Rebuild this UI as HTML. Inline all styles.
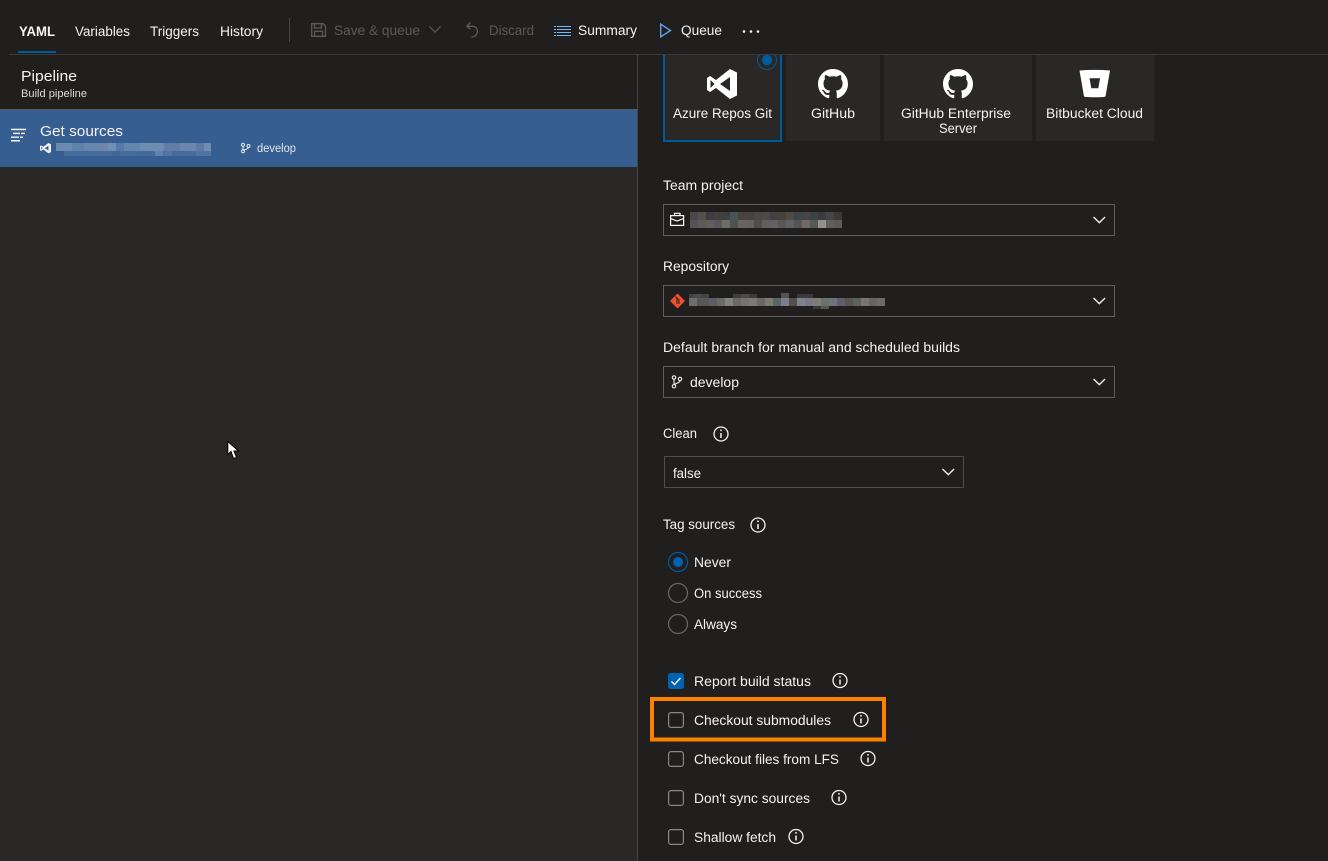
<!DOCTYPE html>
<html lang="en">
<head>
<meta charset="utf-8">
<title>Pipeline - Get sources</title>
<style>
html,body{margin:0;padding:0;width:1328px;height:861px;overflow:hidden;background:#201f1e}
svg{display:block}
text{font-family:"Liberation Sans",sans-serif;font-size:13.5px;fill:#f4f4f4}
.d{fill:#5c5a58}
.i circle{fill:none;stroke:#f4f4f4;stroke-width:1.3}
.i path{fill:none;stroke:#f4f4f4;stroke-width:1.5}
.chev{fill:none;stroke:#f0f0f0;stroke-width:1.4}
.box{fill:none;stroke:#605e5c;stroke-width:1}
.cb{fill:none;stroke:#8a8886;stroke-width:1.2}
.rd{fill:none;stroke:#676563;stroke-width:1.3}
</style>
</head>
<body>
<svg width="1328" height="861" viewBox="0 0 1328 861" xmlns="http://www.w3.org/2000/svg">
<rect width="1328" height="861" fill="#201f1e"/>

<!-- left pane -->
<rect x="0" y="167" width="637" height="694" fill="#292827"/>
<rect x="0" y="109" width="637" height="1" fill="#5b5a59"/>
<rect x="0" y="110" width="637" height="57" fill="#365e91"/>
<rect x="637" y="55" width="1" height="806" fill="#484644"/>

<!-- header -->
<rect x="9" y="54" width="1319" height="1" fill="#3b3a39"/>
<rect x="18" y="51" width="38" height="2" fill="#005a9e"/>
<text x="19" y="36" textLength="36" lengthAdjust="spacingAndGlyphs" font-weight="700">YAML</text>
<text x="75" y="36" textLength="55" lengthAdjust="spacingAndGlyphs">Variables</text>
<text x="150" y="36" textLength="49" lengthAdjust="spacingAndGlyphs">Triggers</text>
<text x="220" y="36" textLength="43" lengthAdjust="spacingAndGlyphs">History</text>
<rect x="289" y="18" width="1" height="24" fill="#484644"/>

<g fill="none" stroke="#5c5a58" stroke-width="1.3">
<path d="M311.7 23.7h11.5l2.3 2.3v10.3h-13.8z"/>
<path d="M314.5 24v4h7v-4M314.5 36.3v-5h8v5"/>
</g>
<text class="d" x="334" y="35" textLength="86" lengthAdjust="spacingAndGlyphs">Save &amp; queue</text>
<path d="M429.5 26.5l5.5 5.5 5.5-5.5" fill="none" stroke="#5c5a58" stroke-width="1.2"/>
<path d="M470.5 22.5l-3.8 3.8 3.8 3M467 26.3h5.5c3.3 0 5 2.3 5 5s-2 5-6 6" fill="none" stroke="#5c5a58" stroke-width="1.3"/>
<text class="d" x="489" y="35" textLength="45" lengthAdjust="spacingAndGlyphs">Discard</text>

<g fill="#76b6f2">
<rect x="557" y="26" width="14" height="1"/><rect x="557" y="29" width="14" height="1"/><rect x="557" y="32" width="14" height="1"/><rect x="557" y="35" width="14" height="1"/>
<rect x="554" y="26" width="2" height="1"/><rect x="554" y="29" width="2" height="1"/><rect x="554" y="32" width="2" height="1"/><rect x="554" y="35" width="2" height="1"/>
</g>
<text x="578" y="35" textLength="59" lengthAdjust="spacingAndGlyphs">Summary</text>
<path d="M660.7 24.2v12.6l9.8-6.3z" fill="none" stroke="#5ea3e6" stroke-width="1.4"/>
<text x="681" y="35" textLength="41" lengthAdjust="spacingAndGlyphs">Queue</text>
<g fill="#f4f4f4"><circle cx="744" cy="31.5" r="1.3"/><circle cx="751" cy="31.5" r="1.3"/><circle cx="758" cy="31.5" r="1.3"/></g>

<!-- left labels -->
<text x="21" y="81" style="font-size:15px" textLength="56" lengthAdjust="spacingAndGlyphs">Pipeline</text>
<text x="21" y="97" style="font-size:11px;fill:#dcdcdc" textLength="66" lengthAdjust="spacingAndGlyphs">Build pipeline</text>

<g fill="#f4f4f4">
<rect x="11" y="128.7" width="15" height="1.5"/><rect x="13" y="132.7" width="7" height="1.4"/><rect x="21" y="132.7" width="4" height="1.4"/>
<rect x="11" y="136.5" width="8" height="1.4"/><rect x="20" y="136.5" width="3" height="1.4"/><rect x="11" y="140" width="9" height="1.5"/>
</g>
<text x="40" y="136" style="font-size:15px" textLength="83" lengthAdjust="spacingAndGlyphs">Get sources</text>
<path fill="#eef2f7" fill-rule="evenodd" transform="translate(40 143) scale(.367 .345) translate(-707 -69)" d="M730 69l7 3.5v23l-7 3.5-14-11-6 4-3-2V78l3-2 6 4zM710.5 80v8l4-4zM730 77l-10 7 10 7z"/>

<!-- blurred text on blue -->
<g>
<rect x="56" y="143" width="155" height="8" fill="#5f82ad"/>
<rect x="56" y="143" width="16" height="8" fill="#6c8ab0"/>
<rect x="84" y="143" width="16" height="8" fill="#6787ad"/>
<rect x="100" y="143" width="8" height="8" fill="#6f86aa"/>
<rect x="108" y="143" width="8" height="8" fill="#7090b3"/>
<rect x="116" y="143" width="8" height="8" fill="#557aa6"/>
<rect x="124" y="143" width="16" height="8" fill="#6586ad"/>
<rect x="140" y="143" width="24" height="8" fill="#6e8bb0"/>
<rect x="164" y="143" width="16" height="8" fill="#627ca6"/>
<rect x="180" y="143" width="16" height="8" fill="#6b87ac"/>
<rect x="196" y="143" width="8" height="8" fill="#5c7ca6"/>
<rect x="204" y="143" width="7" height="8" fill="#708cb0"/>
<rect x="64" y="151" width="147" height="5" fill="#466c9c"/>
<rect x="112" y="151" width="8" height="5" fill="#406798"/>
<rect x="136" y="151" width="16" height="5" fill="#44699a"/>
<rect x="155" y="151" width="8" height="5" fill="#5f83ae"/>
<rect x="164" y="151" width="8" height="5" fill="#5276a2"/>
<rect x="196" y="151" width="15" height="5" fill="#5373a0"/>
</g>

<g fill="none" stroke="#e4e9f0" stroke-width="1">
<circle cx="243" cy="144.8" r="1.5"/><circle cx="243" cy="151.3" r="1.5"/><circle cx="248.5" cy="146" r="1.5"/>
<path d="M243 146.3v3.5M248.5 147.5c0 1.8-3.5 1.5-5.5 3"/>
</g>
<text x="257" y="152" style="font-size:11.5px;fill:#e2e7ee" textLength="39" lengthAdjust="spacingAndGlyphs">develop</text>

<!-- source cards -->
<rect x="664" y="54" width="117" height="87" fill="#292827" stroke="#005a9e" stroke-width="2"/>
<rect x="786" y="55" width="94" height="86" fill="#292827"/>
<rect x="884" y="55" width="148" height="86" fill="#292827"/>
<rect x="1036" y="55" width="118" height="86" fill="#292827"/>
<rect x="660" y="50" width="500" height="4" fill="#201f1e"/>
<rect x="638" y="54" width="690" height="1" fill="#3b3a39"/>

<svg x="757" y="55" width="20" height="16" viewBox="0 0 20 16" overflow="hidden">
<circle cx="10" cy="5" r="9.5" fill="none" stroke="#005a9e" stroke-width="1"/>
<circle cx="10" cy="5" r="5.2" fill="#005a9e"/>
</svg>

<path fill="#fff" fill-rule="evenodd" d="M730 69l7 3.5v23l-7 3.5-14-11-6 4-3-2V78l3-2 6 4zM710.5 80v8l4-4zM730 77l-10 7 10 7z"/>
<text x="673" y="118" textLength="99" lengthAdjust="spacingAndGlyphs">Azure Repos Git</text>

<path fill="#fff" transform="translate(818 69) scale(1.875)" d="M8 0C3.58 0 0 3.58 0 8c0 3.54 2.29 6.53 5.47 7.59.4.07.55-.17.55-.38 0-.19-.01-.82-.01-1.49-2.01.37-2.53-.49-2.69-.94-.09-.23-.48-.94-.82-1.13-.28-.15-.68-.52-.01-.53.63-.01 1.08.58 1.23.82.72 1.21 1.87.87 2.33.66.07-.52.28-.87.51-1.07-1.78-.2-3.64-.89-3.64-3.95 0-.87.31-1.59.82-2.15-.08-.2-.36-1.02.08-2.12 0 0 .67-.21 2.2.82.64-.18 1.32-.27 2-.27.68 0 1.36.09 2 .27 1.53-1.04 2.2-.82 2.2-.82.44 1.1.16 1.92.08 2.12.51.56.82 1.27.82 2.15 0 3.07-1.87 3.75-3.65 3.95.29.25.54.73.54 1.48 0 1.07-.01 1.93-.01 2.2 0 .21.15.46.55.38A8.013 8.013 0 0016 8c0-4.42-3.58-8-8-8z"/>
<text x="811" y="118" textLength="44" lengthAdjust="spacingAndGlyphs">GitHub</text>

<path fill="#fff" transform="translate(943 69) scale(1.875)" d="M8 0C3.58 0 0 3.58 0 8c0 3.54 2.29 6.53 5.47 7.59.4.07.55-.17.55-.38 0-.19-.01-.82-.01-1.49-2.01.37-2.53-.49-2.69-.94-.09-.23-.48-.94-.82-1.13-.28-.15-.68-.52-.01-.53.63-.01 1.08.58 1.23.82.72 1.21 1.87.87 2.33.66.07-.52.28-.87.51-1.07-1.78-.2-3.64-.89-3.64-3.95 0-.87.31-1.59.82-2.15-.08-.2-.36-1.02.08-2.12 0 0 .67-.21 2.2.82.64-.18 1.32-.27 2-.27.68 0 1.36.09 2 .27 1.53-1.04 2.2-.82 2.2-.82.44 1.1.16 1.92.08 2.12.51.56.82 1.27.82 2.15 0 3.07-1.87 3.75-3.65 3.95.29.25.54.73.54 1.48 0 1.07-.01 1.93-.01 2.2 0 .21.15.46.55.38A8.013 8.013 0 0016 8c0-4.42-3.58-8-8-8z"/>
<text x="901" y="118" textLength="110" lengthAdjust="spacingAndGlyphs">GitHub Enterprise</text>
<text x="939" y="133" textLength="38" lengthAdjust="spacingAndGlyphs">Server</text>

<path fill="#fff" fill-rule="evenodd" d="M1079.5 70.5c10-.8 20.5-.8 30.5 0l-4.5 26c-1 1-20.5 1-21.5 0zM1089.5 78.3l1.8 10h7l1.8-10z"/>
<text x="1046" y="118" textLength="97" lengthAdjust="spacingAndGlyphs">Bitbucket Cloud</text>

<!-- Team project -->
<text x="663" y="190" textLength="80" lengthAdjust="spacingAndGlyphs">Team project</text>
<rect class="box" x="663.5" y="204.5" width="451" height="31"/>
<g fill="none" stroke="#fff" stroke-width="1.2">
<rect x="670.6" y="215.6" width="13" height="9.8"/>
<path d="M674.5 215.5v-2.2h5.5v2.2M670.6 218.5l6.5 2.5 6.5-2.5"/>
</g>
<g>
<rect x="690" y="212" width="8" height="8" fill="#484848"/><rect x="698" y="212" width="8" height="8" fill="#54504c"/><rect x="706" y="212" width="8" height="8" fill="#3d3c42"/><rect x="714" y="212" width="8" height="8" fill="#43403d"/><rect x="722" y="212" width="8" height="8" fill="#3e3f41"/><rect x="730" y="212" width="8" height="8" fill="#4c5355"/><rect x="738" y="212" width="8" height="8" fill="#48433f"/><rect x="746" y="212" width="8" height="8" fill="#474340"/><rect x="754" y="212" width="8" height="8" fill="#484848"/><rect x="762" y="212" width="8" height="8" fill="#4b4a49"/><rect x="770" y="212" width="8" height="8" fill="#424140"/><rect x="778" y="212" width="8" height="8" fill="#44413e"/><rect x="786" y="212" width="8" height="8" fill="#4f4a46"/><rect x="794" y="212" width="8" height="8" fill="#3f4444"/><rect x="802" y="212" width="8" height="8" fill="#454545"/><rect x="810" y="212" width="8" height="8" fill="#3e4243"/><rect x="818" y="212" width="8" height="8" fill="#3d3c3c"/><rect x="826" y="212" width="8" height="8" fill="#454545"/><rect x="834" y="212" width="8" height="8" fill="#3a3a3a"/>
<rect x="690" y="220" width="8" height="8" fill="#53545a"/><rect x="698" y="220" width="8" height="8" fill="#5e5a57"/><rect x="706" y="220" width="8" height="8" fill="#615d5a"/><rect x="714" y="220" width="8" height="8" fill="#55585c"/><rect x="722" y="220" width="8" height="8" fill="#6d6e66"/><rect x="730" y="220" width="8" height="8" fill="#4e5351"/><rect x="738" y="220" width="8" height="8" fill="#686462"/><rect x="746" y="220" width="8" height="8" fill="#66625f"/><rect x="754" y="220" width="8" height="8" fill="#4e4e4d"/><rect x="762" y="220" width="8" height="8" fill="#5f605d"/><rect x="770" y="220" width="8" height="8" fill="#606166"/><rect x="778" y="220" width="8" height="8" fill="#595653"/><rect x="786" y="220" width="8" height="8" fill="#5a6268"/><rect x="794" y="220" width="8" height="8" fill="#555"/><rect x="802" y="220" width="8" height="8" fill="#6f6a62"/><rect x="810" y="220" width="8" height="8" fill="#545a57"/><rect x="818" y="220" width="8" height="8" fill="#939189"/><rect x="826" y="220" width="8" height="8" fill="#5f5f5f"/><rect x="834" y="220" width="8" height="8" fill="#5c5c5c"/>
</g>
<path class="chev" d="M1093.5 217l5.8 5.6 5.8-5.6"/>

<!-- Repository -->
<text x="663" y="271" textLength="66" lengthAdjust="spacingAndGlyphs">Repository</text>
<rect class="box" x="663.5" y="285.5" width="451" height="31"/>
<path fill="#f0502f" d="M677.5 293.5l7.5 7.5-7.5 7.5-7.5-7.5z"/>
<path d="M675.5 296.5l3.5 3.5v4M677 298v6" fill="none" stroke="#201f1e" stroke-width="1"/>
<g>
<rect x="689" y="294" width="8" height="4" fill="#3f4144"/><rect x="693" y="294" width="16" height="5" fill="#4b4d4d"/><rect x="701" y="294" width="8" height="4" fill="#444"/><rect x="733" y="294" width="8" height="4" fill="#3f3e3c"/><rect x="741" y="294" width="8" height="4" fill="#494a47"/><rect x="749" y="294" width="8" height="4" fill="#3c3b3a"/><rect x="781" y="293" width="8" height="5" fill="#55524c"/><rect x="797" y="294" width="16" height="4" fill="#3b3a38"/>
<rect x="689" y="298" width="8" height="8" fill="#6c6e72"/><rect x="697" y="298" width="8" height="8" fill="#565758"/><rect x="701" y="298" width="8" height="8" fill="#585856"/><rect x="709" y="298" width="8" height="8" fill="#5f5d68"/><rect x="717" y="298" width="8" height="8" fill="#686b64"/><rect x="725" y="298" width="8" height="8" fill="#828282"/><rect x="733" y="298" width="8" height="8" fill="#696a66"/><rect x="741" y="298" width="8" height="8" fill="#74746c"/><rect x="749" y="298" width="8" height="8" fill="#7a7a74"/><rect x="757" y="298" width="8" height="8" fill="#686868"/><rect x="765" y="298" width="8" height="8" fill="#7b7a6f"/><rect x="773" y="298" width="8" height="8" fill="#596468"/><rect x="781" y="298" width="8" height="8" fill="#7b7e8e"/><rect x="789" y="298" width="8" height="8" fill="#53504a"/><rect x="797" y="298" width="8" height="8" fill="#7b848a"/><rect x="805" y="298" width="8" height="8" fill="#7b7885"/><rect x="813" y="298" width="8" height="8" fill="#7c7e70"/><rect x="821" y="298" width="8" height="8" fill="#6b7070"/><rect x="829" y="298" width="8" height="8" fill="#687679"/><rect x="837" y="298" width="8" height="8" fill="#5f5e6a"/><rect x="845" y="298" width="8" height="8" fill="#5a544f"/><rect x="853" y="298" width="8" height="8" fill="#5a605e"/><rect x="861" y="298" width="8" height="8" fill="#777574"/><rect x="869" y="298" width="8" height="8" fill="#646766"/><rect x="877" y="298" width="8" height="8" fill="#6f6a6a"/>
<rect x="813" y="306" width="8" height="3" fill="#333b3b"/><rect x="821" y="306" width="8" height="3" fill="#55584d"/>
</g>
<path class="chev" d="M1093.5 298l5.8 5.6 5.8-5.6"/>

<!-- Default branch -->
<text x="663" y="352" textLength="297" lengthAdjust="spacingAndGlyphs">Default branch for manual and scheduled builds</text>
<rect class="box" x="663.5" y="366.5" width="451" height="31"/>
<g fill="none" stroke="#f4f4f4" stroke-width="1.1">
<circle cx="674" cy="377.5" r="1.7"/><circle cx="674" cy="386.2" r="1.7"/><circle cx="680" cy="379" r="1.7"/>
<path d="M674 379.2v5.3M680 380.7c0 2.5-4 2.2-6 4"/>
</g>
<text x="690" y="387" textLength="49" lengthAdjust="spacingAndGlyphs">develop</text>
<path class="chev" d="M1093.5 379l5.8 5.6 5.8-5.6"/>

<!-- Clean -->
<text x="663" y="438" textLength="34" lengthAdjust="spacingAndGlyphs">Clean</text>
<g class="i"><circle cx="721" cy="434" r="7"/><path d="M721 433v5M721 429.5v1.6"/></g>
<rect class="box" x="664.5" y="456.5" width="299" height="31" style="stroke:#4f4d4b"/>
<text x="673" y="478" textLength="28" lengthAdjust="spacingAndGlyphs">false</text>
<path class="chev" d="M942.5 469l5.8 5.6 5.8-5.6"/>

<!-- Tag sources -->
<text x="663" y="529" textLength="72" lengthAdjust="spacingAndGlyphs">Tag sources</text>
<g class="i"><circle cx="758" cy="525" r="7"/><path d="M758 524v5M758 520.5v1.6"/></g>
<circle cx="678" cy="562" r="9.5" fill="none" stroke="#005a9e" stroke-width="1.2"/>
<circle cx="678" cy="562" r="5" fill="#0063b1"/>
<text x="694" y="567" textLength="37" lengthAdjust="spacingAndGlyphs">Never</text>
<circle class="rd" cx="678" cy="593" r="9.5"/>
<text x="694" y="598" textLength="68" lengthAdjust="spacingAndGlyphs">On success</text>
<circle class="rd" cx="678" cy="624" r="9.5"/>
<text x="694" y="629" textLength="43" lengthAdjust="spacingAndGlyphs">Always</text>

<!-- Checkboxes -->
<rect x="668" y="673" width="16" height="16" rx="2.5" fill="#0063b1"/>
<path d="M671.5 681.5l3 3 6-6.5" fill="none" stroke="#fff" stroke-width="1.3"/>
<text x="694" y="686" textLength="117" lengthAdjust="spacingAndGlyphs">Report build status</text>
<g class="i"><circle cx="840" cy="680.5" r="7"/><path d="M840 679.5v5M840 676v1.6"/></g>

<rect x="652" y="699" width="232" height="40.5" fill="none" stroke="#fb8200" stroke-width="4"/>
<rect class="cb" x="668.6" y="712.6" width="14.8" height="14.8" rx="2.5"/>
<text x="694" y="725" textLength="137" lengthAdjust="spacingAndGlyphs">Checkout submodules</text>
<g class="i"><circle cx="861" cy="719.5" r="7"/><path d="M861 718.5v5M861 715v1.6"/></g>

<rect class="cb" x="668.6" y="751.6" width="14.8" height="14.8" rx="2.5"/>
<text x="694" y="764" textLength="145" lengthAdjust="spacingAndGlyphs">Checkout files from LFS</text>
<g class="i"><circle cx="868" cy="758.5" r="7"/><path d="M868 757.5v5M868 754v1.6"/></g>

<rect class="cb" x="668.6" y="790.6" width="14.8" height="14.8" rx="2.5"/>
<text x="694" y="803" textLength="116" lengthAdjust="spacingAndGlyphs">Don't sync sources</text>
<g class="i"><circle cx="839" cy="797.5" r="7"/><path d="M839 796.5v5M839 793v1.6"/></g>

<rect class="cb" x="668.6" y="829.6" width="14.8" height="14.8" rx="2.5"/>
<text x="694" y="842" textLength="82" lengthAdjust="spacingAndGlyphs">Shallow fetch</text>
<g class="i"><circle cx="796" cy="836.5" r="7"/><path d="M796 835.5v5M796 832v1.6"/></g>

<!-- cursor -->
<path d="M227.8 441.5V454.5L231 451.5L233.5 458.5L236.5 457.5L234 451H238.5Z" fill="#fff" stroke="#000" stroke-width="1"/>
</svg>
</body>
</html>
